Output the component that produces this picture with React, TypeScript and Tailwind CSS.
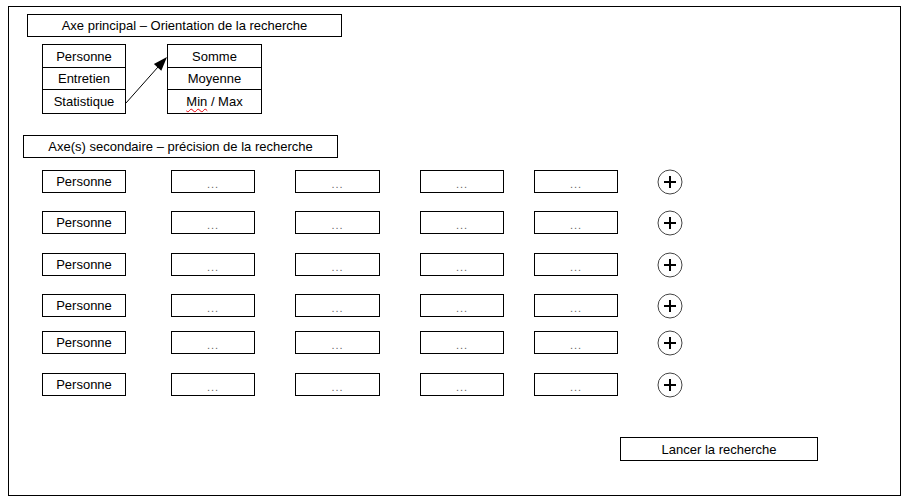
import React from 'react'

const rowMargins = ['mt-[12px]', 'mt-[18px]', 'mt-[19px]', 'mt-[18px]', 'mt-[14px]', 'mt-[19px]']

function Cell({ children, className = '' }: { children?: React.ReactNode; className?: string }) {
  return (
    <div className={`h-[23px] border border-black flex items-center justify-center ${className}`}>
      {children}
    </div>
  )
}

function Dots() {
  return <span className="text-[11px] text-[#666] pt-[5px] tracking-[1px]">...</span>
}

function PlusIcon() {
  return (
    <svg width="26" height="26" viewBox="0 0 26 26">
      <circle cx="13" cy="13" r="12" fill="white" stroke="#444" strokeWidth="1" />
      <line x1="7" y1="13" x2="19" y2="13" stroke="black" strokeWidth="2" />
      <line x1="13" y1="7" x2="13" y2="19" stroke="black" strokeWidth="2" />
    </svg>
  )
}

export default function App() {
  return (
    <div
      className="w-[905px] h-[499px] bg-white pt-[6px] pl-[8px] text-[13px] text-black leading-none"
      style={{ fontFamily: '"Liberation Sans", Arial, sans-serif' }}
    >
      <div className="w-[893px] h-[490px] border border-black">
        {/* axe principal */}
        <Cell className="ml-[18px] mt-[7px] w-[315px]">Axe principal – Orientation de la recherche</Cell>

        <div className="flex ml-[33px] mt-[7px]">
          <div className="w-[84px] border border-black">
            <div className="h-[22px] flex items-center justify-center">Personne</div>
            <div className="h-[22px] flex items-center justify-center border-t border-black">Entretien</div>
            <div className="h-[23px] flex items-center justify-center border-t border-black">Statistique</div>
          </div>
          <svg width="41" height="70" className="overflow-visible">
            <line x1="0" y1="59" x2="32" y2="23" stroke="black" strokeWidth="1" />
            <polygon points="41,13 35.3,26.7 27.9,19.9" fill="black" />
          </svg>
          <div className="w-[95px] border border-black">
            <div className="h-[22px] flex items-center justify-center">Somme</div>
            <div className="h-[22px] flex items-center justify-center border-t border-black">Moyenne</div>
            <div className="h-[23px] flex items-center justify-center border-t border-black">
              <span className="underline decoration-wavy decoration-red-600 decoration-1 underline-offset-2">Min</span>
              <span>&nbsp;/ Max</span>
            </div>
          </div>
        </div>

        {/* axes secondaires */}
        <Cell className="ml-[14px] mt-[21px] w-[315px]">Axe(s) secondaire – précision de la recherche</Cell>

        {rowMargins.map((m, i) => (
          <div key={i} className={`flex items-center h-[23px] ml-[33px] ${m}`}>
            <Cell className="w-[84px]">Personne</Cell>
            <Cell className="w-[84px] ml-[45px]"><Dots /></Cell>
            <Cell className="w-[85px] ml-[40px]"><Dots /></Cell>
            <Cell className="w-[84px] ml-[40px]"><Dots /></Cell>
            <Cell className="w-[84px] ml-[30px]"><Dots /></Cell>
            <div className="ml-[39px] h-[23px] flex items-center"><PlusIcon /></div>
          </div>
        ))}

        <Cell className="ml-[611px] mt-[41px] w-[198px] h-[24px]">Lancer la recherche</Cell>
      </div>
    </div>
  )
}
